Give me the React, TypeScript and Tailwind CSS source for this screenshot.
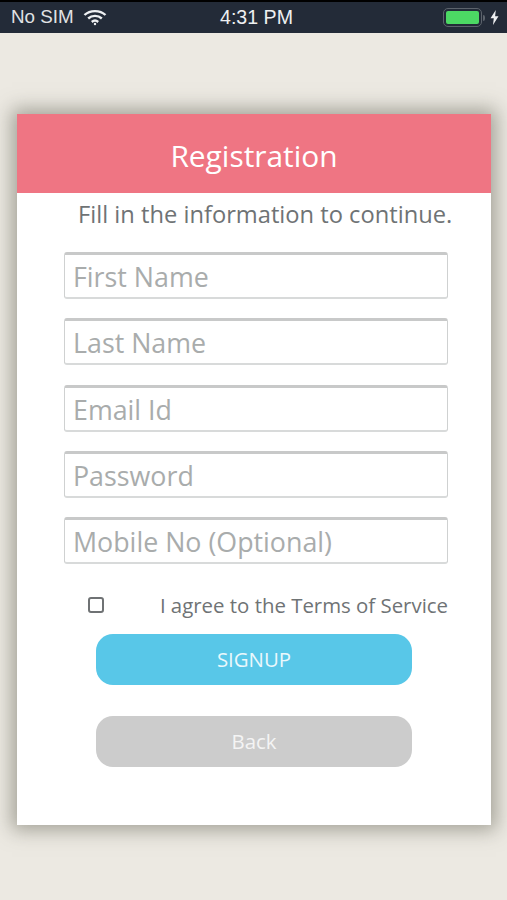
import React from "react";

const fields = ["First Name", "Last Name", "Email Id", "Password", "Mobile No (Optional)"];

export default function App() {
  return (
    <div className="w-[507px] h-[900px] overflow-hidden bg-[#ece9e2] flex flex-col font-['Open_Sans',sans-serif]">
      <div className="h-[33px] shrink-0 bg-[#232b38] border-t-[2px] border-black flex items-center pl-[11px] pr-[8px] text-[#e0e2e4] font-['Liberation_Sans',sans-serif] text-[18.8px] relative">
        <span>No SIM</span>
        <svg className="ml-[9px]" width="24" height="17" viewBox="0 0 24 17" fill="none" stroke="#eef0f2" strokeWidth="2.4">
          <path d="M1.5 6 C7 0.8 17 0.8 22.5 6" />
          <path d="M5.2 9.5 C9 6 15 6 18.8 9.5" />
          <path d="M8.8 13 C10.8 11.2 13.2 11.2 15.2 13" />
          <circle cx="12" cy="15" r="1.2" fill="#eef0f2" stroke="none" />
        </svg>
        <span className="absolute left-[220px] text-[19.6px] font-medium text-[#eef0f2]">4:31 PM</span>
        <div className="ml-auto flex items-center">
          <div className="w-[39px] h-[19px] rounded-[5px] border-[1.5px] border-[#5c636c] p-[2px]">
            <div className="w-full h-full bg-[#4cd964] rounded-[2px]" />
          </div>
          <div className="w-[2px] h-[6px] bg-[#5c636c] ml-[1px] rounded-r-sm" />
          <svg className="ml-[5px]" width="9" height="15" viewBox="0 0 9 15" fill="#eef0f2">
            <path d="M5.8 0 L0.5 8.3 H3.8 L3 15 L8.5 6.2 H5.1 Z" />
          </svg>
        </div>
      </div>

      <div className="mt-[81px] mx-[17px] w-[474px] h-[711px] bg-white shadow-[0_0_18px_5px_rgba(90,90,75,0.5)] flex flex-col">
        <div className="h-[79px] shrink-0 bg-[#ef7583] flex items-center justify-center text-white text-[29.9px] pt-[6px]">
          Registration
        </div>
        <div className="mt-[4px] pl-[61px] h-[34px] text-[23.7px] leading-[34px] text-[#6f7375] whitespace-nowrap">
          Fill in the information to continue.
        </div>
        <div className="mt-[21px] ml-[47px] w-[384px] flex flex-col gap-[19.3px]">
          {fields.map((f) => (
            <div
              key={f}
              className="h-[47px] rounded-[3px] border border-[#cfd1d1] border-t-[3px] border-t-[#c8c9c9] border-b-2 border-b-[#d8dada] pl-[8px] pt-[2px] flex items-center text-[26.8px] text-[#a9acac] whitespace-nowrap"
            >
              {f}
            </div>
          ))}
        </div>
        <div className="mt-[29px] ml-[71px] flex items-center h-[24px] w-[360px]">
          <div className="w-[16px] h-[16px] rounded-[3px] border-2 border-[#6f7274]" />
          <span className="ml-auto text-[20.4px] text-[#6f7375] whitespace-nowrap">I agree to the Terms of Service</span>
        </div>
        <div className="mt-[17px] ml-[79px] w-[316px] h-[51px] rounded-[17px] bg-[#58c7e8] flex items-center justify-center text-[20.4px] text-[#eaf8fc]">
          SIGNUP
        </div>
        <div className="mt-[31px] ml-[79px] w-[316px] h-[51px] rounded-[17px] bg-[#cccccc] flex items-center justify-center text-[20.4px] text-[#f4f4f4]">
          Back
        </div>
      </div>
    </div>
  );
}
